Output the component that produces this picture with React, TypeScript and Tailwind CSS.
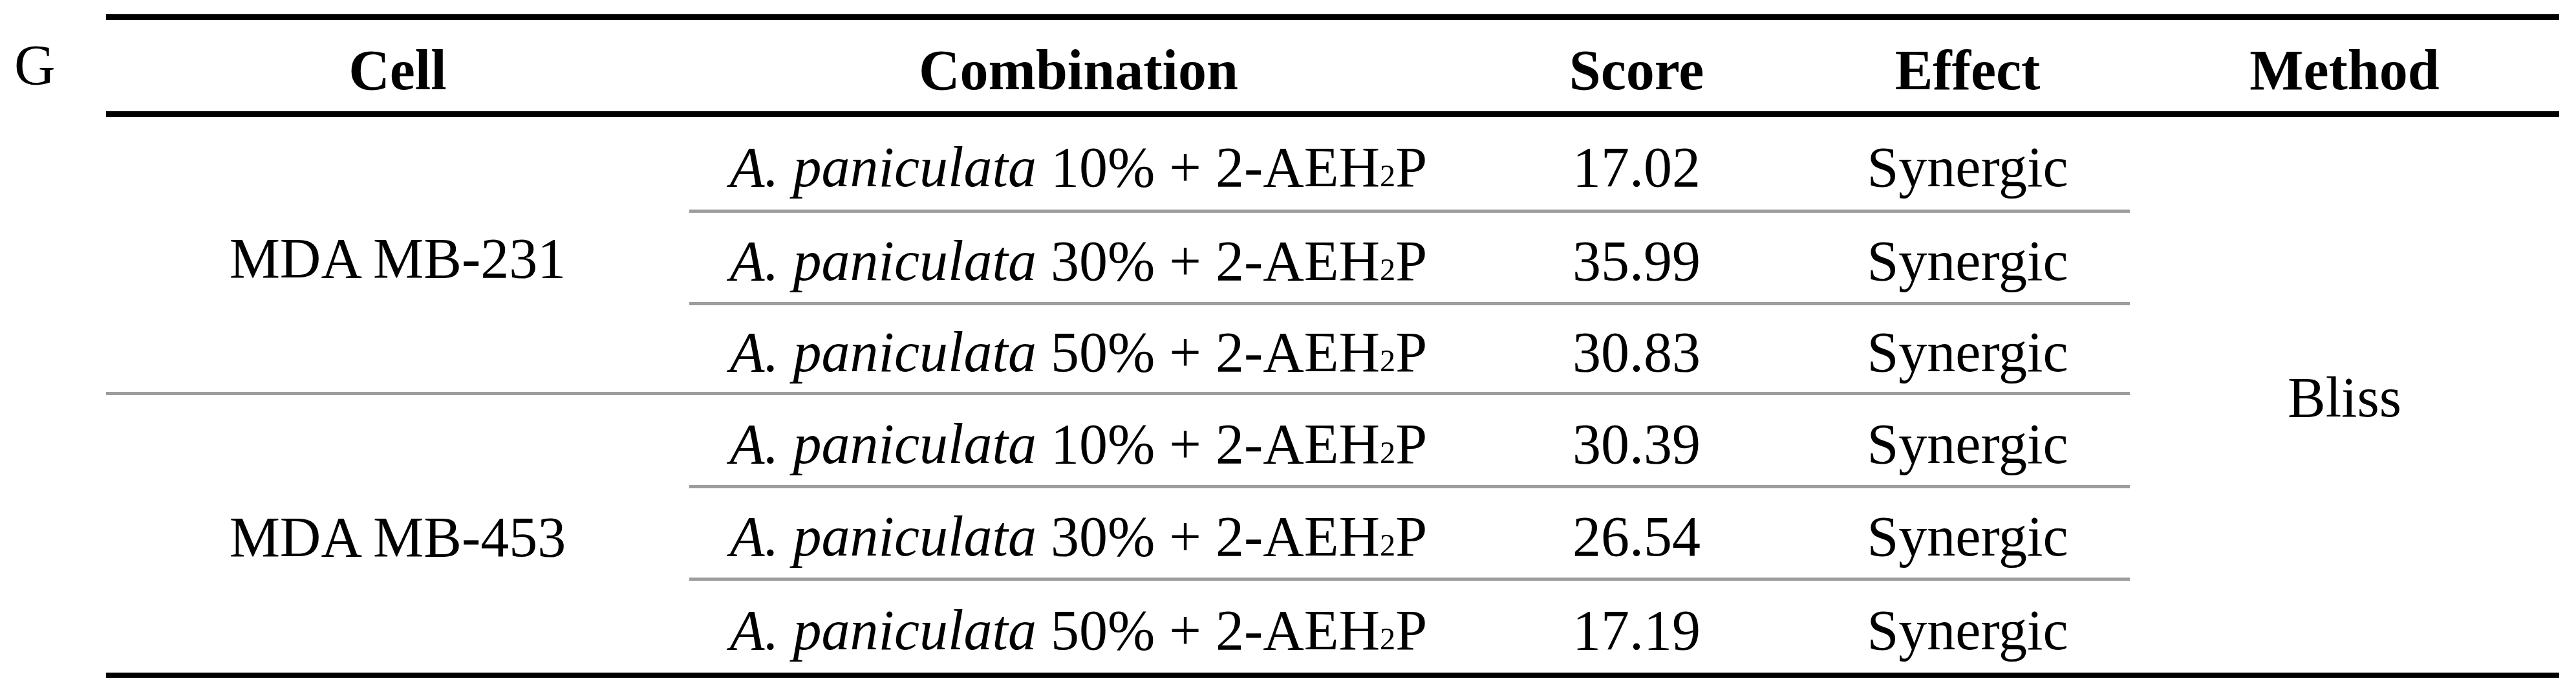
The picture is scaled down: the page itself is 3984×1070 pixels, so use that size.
type Row = { combo: string; score: string };

const rows: Row[] = [
  { combo: "10%", score: "17.02" },
  { combo: "30%", score: "35.99" },
  { combo: "50%", score: "30.83" },
  { combo: "10%", score: "30.39" },
  { combo: "30%", score: "26.54" },
  { combo: "50%", score: "17.19" },
];

// literal class names per row so tailwind picks them up
const rowStart = ["row-start-1", "row-start-2", "row-start-3", "row-start-4", "row-start-5", "row-start-6"];

const cols = "grid grid-cols-[902px_1204px_522px_502px_664px]";

function Combination({ pct }: { pct: string }) {
  return (
    <span className="whitespace-nowrap">
      <i>A. paniculata</i> {pct} + 2-AEH<span className="text-[0.55em]">2</span>P
    </span>
  );
}

export default function App() {
  return (
    <div className="flex w-[3984px] h-[1070px] bg-white text-black font-['Liberation_Serif',serif] text-[88px] leading-none">
      <div className="w-[164px] shrink-0 pl-[22px] pt-[57px]">G</div>

      <div className="mt-[22px] w-[3794px] self-start border-t-[9px] border-b-[8px] border-black">
        {/* header */}
        <div className={`${cols} h-[150px] border-b-[9px] border-black font-bold`}>
          <div className="flex items-center justify-center pt-[15px]">Cell</div>
          <div className="flex items-center justify-center pt-[15px]">Combination</div>
          <div className="flex items-center justify-center pt-[15px]">Score</div>
          <div className="flex items-center justify-center pt-[15px]">Effect</div>
          <div className="flex items-center justify-center pt-[15px]">Method</div>
        </div>

        {/* body */}
        <div className={`${cols} grid-rows-[148px_143px_139px_144px_143px_142px]`}>
          <div className="col-start-1 row-start-1 row-span-3 flex items-center justify-center pt-[12px] border-b-[5px] border-[#9d9d9d]">
            MDA MB-231
          </div>
          <div className="col-start-1 row-start-4 row-span-3 flex items-center justify-center pt-[10px]">
            MDA MB-453
          </div>
          <div className="col-start-5 row-start-1 row-span-6 flex items-center justify-center pt-[8px]">
            Bliss
          </div>

          {rows.map((r, i) => {
            const line = i < rows.length - 1 ? "border-b-[5px] border-[#9d9d9d]" : "";
            return [
              <div key={`c${i}`} className={`col-start-2 ${rowStart[i]} flex items-center justify-center pt-[12px] ${line}`}>
                <Combination pct={r.combo} />
              </div>,
              <div key={`s${i}`} className={`col-start-3 ${rowStart[i]} flex items-center justify-center pt-[12px] ${line}`}>
                {r.score}
              </div>,
              <div key={`e${i}`} className={`col-start-4 ${rowStart[i]} flex items-center justify-center pt-[12px] ${line}`}>
                Synergic
              </div>,
            ];
          })}
        </div>
      </div>
    </div>
  );
}
